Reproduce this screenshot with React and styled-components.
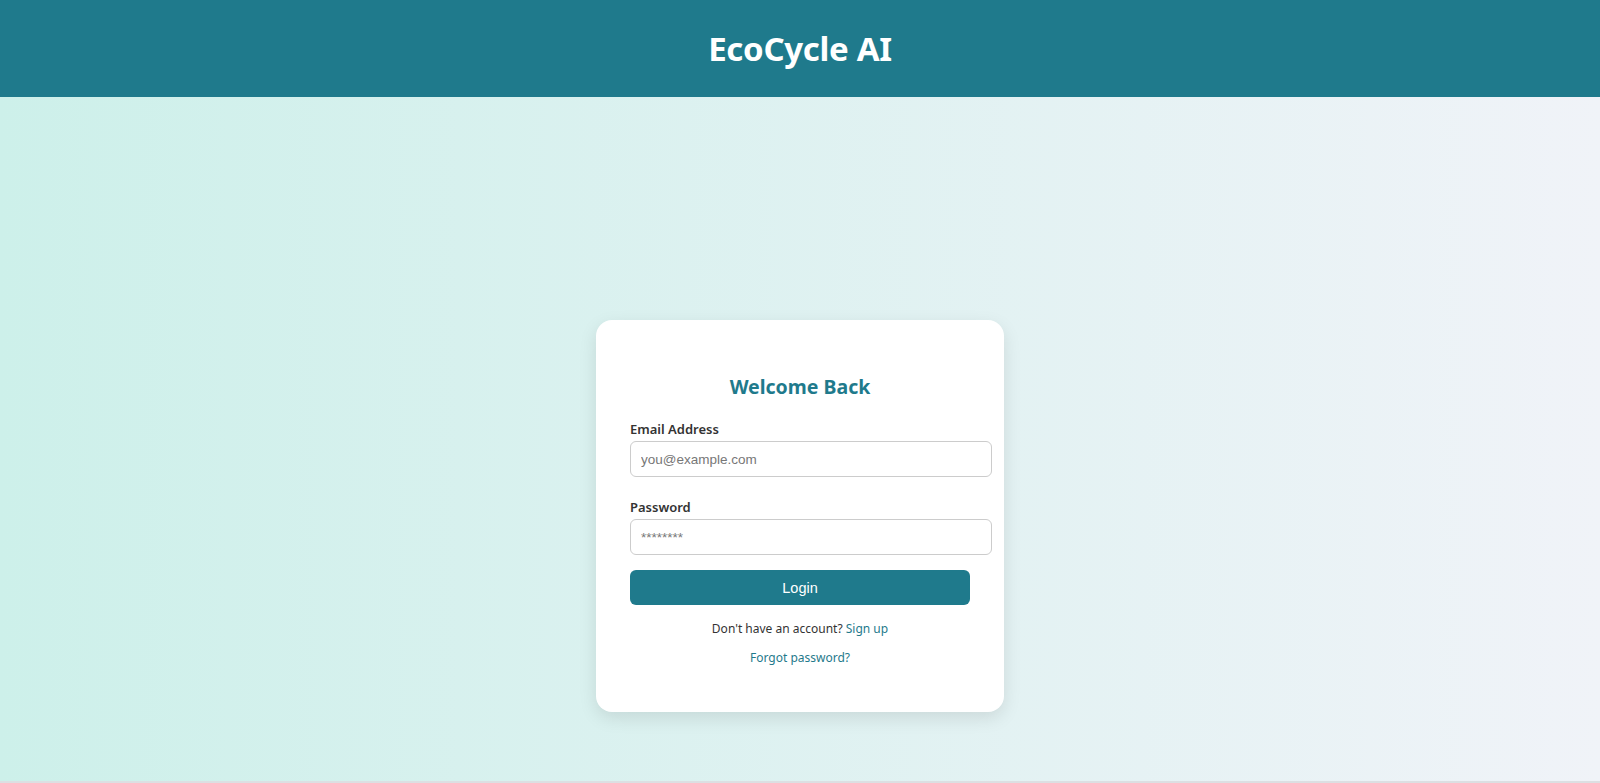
import React from "react";
import styled, { createGlobalStyle } from "styled-components";

const GlobalStyle = createGlobalStyle`
  html, body {
    margin: 0;
    padding: 0;
  }
  body {
    font-family: "Noto Sans", "Open Sans", sans-serif;
    color: #333;
  }
`;

export default function App() {
  return (
    <>
      <GlobalStyle />
      <Page>
        <Header>
          <Brand>EcoCycle AI</Brand>
        </Header>
        <Main>
          <Card>
            <Title>Welcome Back</Title>
            <form onSubmit={e => e.preventDefault()}>
              <Field>
                <Label htmlFor="email">Email Address</Label>
                <Input id="email" type="email" placeholder="you@example.com" />
              </Field>
              <Field>
                <Label htmlFor="password">Password</Label>
                <Input id="password" type="password" placeholder="********" />
              </Field>
              <Button type="submit">Login</Button>
            </form>
            <Note>
              Don't have an account? <Link href="#">Sign up</Link>
            </Note>
            <Note $last>
              <Link href="#">Forgot password?</Link>
            </Note>
          </Card>
        </Main>
      </Page>
    </>
  );
}

const Page = styled.div`
  min-height: 783px;
  display: flex;
  flex-direction: column;
`;

const Header = styled.header`
  height: 97px;
  background: #1f7a8c;
  display: flex;
  align-items: center;
  justify-content: center;
`;

const Brand = styled.h1`
  margin: 0;
  color: #fff;
  font-size: 33px;
  font-weight: 700;
  letter-spacing: -0.3px;
`;

const Main = styled.main`
  height: 686px;
  box-sizing: border-box;
  border-bottom: 2px solid #dcdfe2;
  padding-top: 223px;
  display: flex;
  justify-content: center;
  align-items: flex-start;
  background: linear-gradient(90deg, #cdf0ea 0%, #f0f3f8 100%);
`;

const Card = styled.div`
  width: 340px;
  padding: 34px;
  background: #fff;
  border-radius: 16px;
  box-shadow: 0 6px 18px rgba(0, 0, 0, 0.1);
`;

const Title = styled.h2`
  margin: 19px 0 20px;
  text-align: center;
  color: #1f7a8c;
  font-size: 19.5px;
  font-weight: 700;
  line-height: 27px;
`;

const Field = styled.div`
  margin-bottom: 21px;
`;

const Label = styled.label`
  display: block;
  margin-bottom: 2px;
  font-size: 13px;
  font-weight: 600;
  line-height: 19px;
  color: #333;
`;

const Input = styled.input`
  display: block;
  box-sizing: border-box;
  width: calc(100% + 22px);
  height: 36px;
  padding: 9.5px 10px;
  border: 1px solid #ccc;
  border-radius: 6px;
  font-family: "Liberation Sans", Arial, sans-serif;
  font-size: 13.5px;
  line-height: 15px;
  color: #333;
  outline: none;

  &::placeholder {
    color: #777;
  }
`;

const Button = styled.button`
  display: block;
  width: 100%;
  height: 35px;
  margin-top: -6px;
  border: none;
  border-radius: 6px;
  background: #1f7a8c;
  color: #fff;
  font-family: "Liberation Sans", Arial, sans-serif;
  font-size: 14.5px;
  cursor: pointer;
`;

const Note = styled.p`
  margin: ${p => (p.$last ? "10.5px 0 11px" : "15px 0 0")};
  text-align: center;
  font-size: 12px;
  line-height: 18px;
  color: #333;
`;

const Link = styled.a`
  color: #1f7a8c;
  text-decoration: none;
`;
